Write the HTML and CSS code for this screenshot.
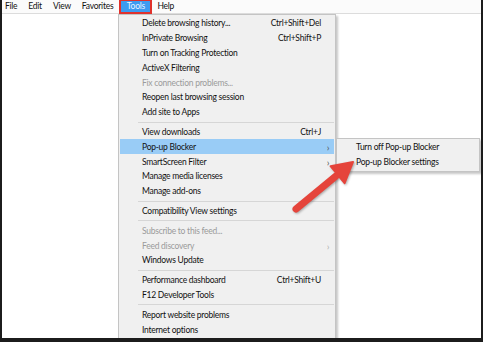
FILE: index.html
```html
<!DOCTYPE html>
<html lang="en">
<head>
    <meta charset="UTF-8">
    <title>Tools menu</title>
    <link rel="stylesheet" href="styles.css">
</head>
<body>
    <div class="screen">
        <div class="menubar">
            <span class="menubar-item">File</span>
            <span class="menubar-item">Edit</span>
            <span class="menubar-item">View</span>
            <span class="menubar-item">Favorites</span>
            <span class="menubar-item active">Tools</span>
            <span class="menubar-item">Help</span>
        </div>

        <div class="page"></div>

        <!-- Tools dropdown -->
        <div class="menu tools-menu">
            <div class="row"><span class="label">Delete browsing history...</span><span class="key">Ctrl+Shift+Del</span><span class="sub"></span></div>
            <div class="row"><span class="label">InPrivate Browsing</span><span class="key">Ctrl+Shift+P</span><span class="sub"></span></div>
            <div class="row"><span class="label">Turn on Tracking Protection</span><span class="sub"></span></div>
            <div class="row"><span class="label">ActiveX Filtering</span><span class="sub"></span></div>
            <div class="row disabled"><span class="label">Fix connection problems...</span><span class="sub"></span></div>
            <div class="row"><span class="label">Reopen last browsing session</span><span class="sub"></span></div>
            <div class="row"><span class="label">Add site to Apps</span><span class="sub"></span></div>
            <div class="sep"></div>
            <div class="row"><span class="label">View downloads</span><span class="key">Ctrl+J</span><span class="sub"></span></div>
            <div class="row selected"><span class="label">Pop-up Blocker</span><span class="sub">&#8250;</span></div>
            <div class="row"><span class="label">SmartScreen Filter</span><span class="sub">&#8250;</span></div>
            <div class="row"><span class="label">Manage media licenses</span><span class="sub"></span></div>
            <div class="row"><span class="label">Manage add-ons</span><span class="sub"></span></div>
            <div class="sep"></div>
            <div class="row"><span class="label">Compatibility View settings</span><span class="sub"></span></div>
            <div class="sep"></div>
            <div class="row disabled"><span class="label">Subscribe to this feed...</span><span class="sub"></span></div>
            <div class="row disabled"><span class="label">Feed discovery</span><span class="sub">&#8250;</span></div>
            <div class="row"><span class="label">Windows Update</span><span class="sub"></span></div>
            <div class="sep"></div>
            <div class="row"><span class="label">Performance dashboard</span><span class="key">Ctrl+Shift+U</span><span class="sub"></span></div>
            <div class="row"><span class="label">F12 Developer Tools</span><span class="sub"></span></div>
            <div class="sep"></div>
            <div class="row"><span class="label">Report website problems</span><span class="sub"></span></div>
            <div class="row"><span class="label">Internet options</span><span class="sub"></span></div>
        </div>

        <!-- Pop-up Blocker submenu -->
        <div class="menu popup-menu">
            <div class="row"><span class="label">Turn off Pop-up Blocker</span></div>
            <div class="row"><span class="label">Pop-up Blocker settings</span></div>
        </div>

        <!-- red callout arrow -->
        <svg class="callout" width="483" height="342" viewBox="0 0 483 342">
            <line x1="294" y1="209" x2="334" y2="176" stroke="#e5443b" stroke-width="7" stroke-linecap="round"/>
            <polygon points="328.6,166.2 351,162 342.6,183.2" fill="#e5443b" stroke="#e5443b" stroke-width="2" stroke-linejoin="round"/>
        </svg>
    </div>
</body>
</html>
```

FILE: styles.css
```css
body {
    margin: 0;
    background-color: #ffffff;
    font-family: Lato, "Liberation Sans", Arial, sans-serif;
    font-size: 8.5px;
    letter-spacing: -0.25px;
    color: #111111;
}

.screen {
    position: relative;
    width: 483px;
    height: 342px;
    box-sizing: border-box;
    border-left: 2px solid #1c1c1c;
    border-right: 2px solid #1c1c1c;
    border-bottom: 4px solid #1c1c1c;
    background-color: #ffffff;
    overflow: hidden;
}

.menubar {
    display: flex;
    height: 13px;
    border-bottom: 1px solid #dcdcdc;
    background-color: #fbfbfb;
}

.menubar-item {
    display: flex;
    align-items: center;
    padding: 0 5.5px;
    line-height: 13px;
}

.menubar-item:first-child {
    padding-left: 3px;
}

.menubar-item.active {
    padding: 0 5px 0 6px;
    height: 11px;
    border: 2px solid #e0322c;
    border-top-width: 1px;
    background-color: #3d9bf0;
    color: #e8f3ff;
}

.page {
    height: 100%;
}

.menu {
    position: absolute;
    box-sizing: border-box;
    background-color: #f0f0f0;
    border: 1px solid #c4c4c4;
    padding: 1px;
    box-shadow: 2px 2px 2px rgba(0, 0, 0, 0.22);
}

.tools-menu {
    left: 116px;
    top: 14px;
    width: 218px;
}

.popup-menu {
    left: 334px;
    top: 138px;
    width: 144px;
}

.row {
    display: flex;
    align-items: center;
    height: 14.8px;
    padding-left: 22px;
}

.popup-menu .row {
    padding-left: 18px;
}

.row .label {
    flex: 1;
    white-space: nowrap;
}

.row .key {
    white-space: nowrap;
    margin-right: 1px;
}

.row .sub {
    width: 12px;
    text-align: center;
    font-size: 10px;
    color: #555555;
}

.row.selected {
    background-color: #99ccf6;
}

.row.disabled {
    color: #9b9b9b;
}

.row.disabled .sub {
    color: #b0b0b0;
}

.sep {
    height: 1px;
    margin: 2px 0 2px 18px;
    background-color: #d6d6d6;
}

.callout {
    position: absolute;
    left: 0;
    top: 0;
    pointer-events: none;
    filter: drop-shadow(1px 1px 1px rgba(0, 0, 0, 0.3));
}
```
